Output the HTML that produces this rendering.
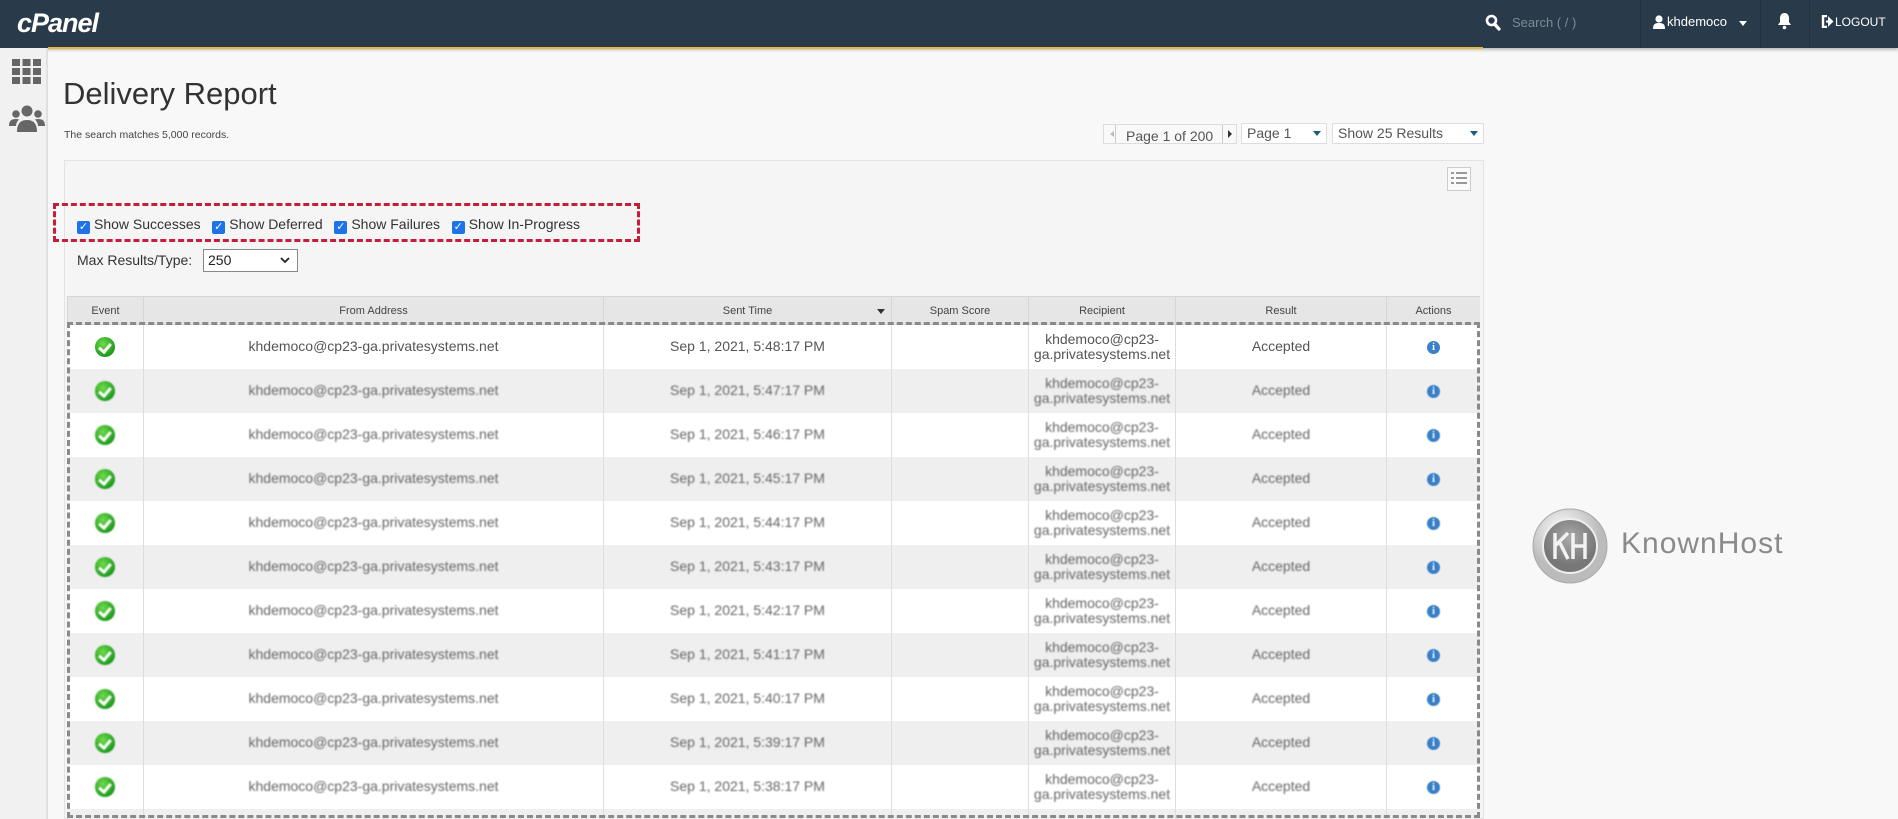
<!DOCTYPE html>
<html style="width:1898px;height:819px;overflow:hidden"><head><meta charset="utf-8"><style>
*{box-sizing:border-box;margin:0;padding:0}
body{width:1898px;height:819px;overflow:hidden;background:#f8f8f8;font-family:"Liberation Sans",sans-serif;position:relative}
.top{position:absolute;left:0;top:0;width:1898px;height:48px;background:#293a4a;box-shadow:0 2px 3px rgba(0,0,0,.25)}
.abs{position:absolute}
.side{position:absolute;left:0;top:48px;width:48px;height:771px;background:#f1f1f1;border-right:2px solid #e0e0e0}
.sep{position:absolute;top:0;width:1px;height:48px;background:#22303d}
table{border-collapse:collapse;table-layout:fixed}
td,th{border-right:1px solid #ddd;text-align:center;font-size:14px;color:#555}
th{height:28px;font-size:11px;font-weight:normal;color:#444;background:#e6e6e6;border:1px solid #d6d6d6}
td{height:44px;line-height:15px}
tr.o td{background:#fff}
tr.e td{background:#efefef}
tr.b td span{filter:blur(.7px);color:#666}
.chk{width:20px;height:20px;border-radius:50%;background:radial-gradient(circle at 40% 35%,#6fdc4a,#1e9a1e 70%);display:inline-block;position:relative;vertical-align:middle}
.chk:after{content:"";position:absolute;left:6px;top:4px;width:5px;height:9px;border:solid #fff;border-width:0 3px 3px 0;transform:rotate(40deg)}
.inf{width:13px;height:13px;border-radius:50%;background:#3a7fc9;display:inline-block;color:#fff;font-size:10px;line-height:13px;font-weight:bold;font-family:"Liberation Serif",serif;vertical-align:middle}
tr.b td span.inf{color:#fff;filter:blur(.5px)}
.cb{display:inline-block;width:13px;height:13px;background:#1e73e8;border-radius:2px;color:#fff;font-size:11px;line-height:13px;text-align:center;vertical-align:-1px;margin-right:4px}
</style></head><body>
<div class="top">
 <div class="abs" style="left:17px;top:8px;color:#fff;font-size:27px;font-weight:bold;font-style:italic;letter-spacing:-1px">cPanel</div>
 <svg class="abs" style="left:1485px;top:14px" width="16" height="18" viewBox="0 0 16 18"><circle cx="6.5" cy="6.5" r="4.5" fill="none" stroke="#fff" stroke-width="2.6"/><path d="M9.5 10l4.5 5" stroke="#fff" stroke-width="3.2" stroke-linecap="round"/></svg>
 <div class="abs" style="left:1512px;top:15px;color:#7e8a96;font-size:13px">Search ( / )</div>
 <div class="sep" style="left:1640px"></div>
 <svg class="abs" style="left:1653px;top:15px" width="12" height="14" viewBox="0 0 12 14"><circle cx="6" cy="4" r="3.6" fill="#fff"/><path d="M0 14c0-5 2-6 6-6s6 1 6 6z" fill="#fff"/></svg>
 <div class="abs" style="left:1667px;top:14px;color:#fff;font-size:13px">khdemoco</div>
 <div class="abs" style="left:1739px;top:21px;border:4px solid transparent;border-top:5px solid #fff"></div>
 <div class="sep" style="left:1760px"></div>
 <svg class="abs" style="left:1777px;top:12px" width="15" height="18" viewBox="0 0 15 18"><path d="M7.5 1c3 0 4.5 2.5 4.5 5v4l2 3H1l2-3V6c0-2.5 1.5-5 4.5-5z" fill="#fff"/><circle cx="7.5" cy="15.5" r="1.8" fill="#fff"/></svg>
 <div class="sep" style="left:1809px"></div>
 <svg class="abs" style="left:1821px;top:15px" width="13" height="13" viewBox="0 0 13 13"><path d="M6 1H2v11h4" fill="none" stroke="#fff" stroke-width="2.4"/><path d="M5 6.5h4M8 3.5l3 3-3 3z" stroke="#fff" stroke-width="2" fill="#fff"/></svg>
 <div class="abs" style="left:1835px;top:15px;color:#fff;font-size:12px">LOGOUT</div>
</div>
<div class="abs" style="left:48px;top:47px;width:1435px;height:2px;background:#e2b93b"></div>
<div class="side">
 <svg class="abs" style="left:12px;top:11px" width="29" height="25" viewBox="0 0 29 25"><g fill="#666"><rect x="0" y="0" width="8" height="7"/><rect x="10.5" y="0" width="8" height="7"/><rect x="21" y="0" width="8" height="7"/><rect x="0" y="9" width="8" height="7"/><rect x="10.5" y="9" width="8" height="7"/><rect x="21" y="9" width="8" height="7"/><rect x="0" y="18" width="8" height="7"/><rect x="10.5" y="18" width="8" height="7"/><rect x="21" y="18" width="8" height="7"/></g></svg>
 <svg class="abs" style="left:9px;top:57px" width="36" height="27" viewBox="0 0 36 27"><g fill="#666"><circle cx="18" cy="6" r="5.5"/><circle cx="7" cy="9" r="3.8"/><circle cx="29" cy="9" r="3.8"/><path d="M8 27c0-9 4-12 10-12s10 3 10 12z"/><path d="M0 21c0-5 2-7 7-7 2 0 3 .5 3 .5-2 2-3 4-3 6.5z"/><path d="M36 21c0-5-2-7-7-7-2 0-3 .5-3 .5 2 2 3 4 3 6.5z"/></g></svg>
</div>
<div class="abs" style="left:63px;top:76px;font-size:31px;color:#333">Delivery Report</div>
<div class="abs" style="left:64px;top:129px;font-size:10.5px;color:#444">The search matches 5,000 records.</div>
<div class="abs" style="left:1103px;top:124px;width:134px;height:20px;border:1px solid #ddd;background:#f9f9f9;font-size:14px;color:#555;line-height:20px">
 <span class="abs" style="left:3px;top:6px;border:3px solid transparent;border-right:4px solid #bbb"></span>
 <span class="abs" style="left:11px;top:0;height:18px;border-left:1px solid #ccc"></span>
 <span class="abs" style="left:22px;top:1px">Page 1 of 200</span>
 <span class="abs" style="left:118px;top:0;height:18px;border-left:1px solid #ccc"></span>
 <span class="abs" style="left:124px;top:5px;border:4px solid transparent;border-left:4px solid #333"></span>
</div>
<div class="abs" style="left:1241px;top:123px;width:86px;height:21px;border:1px solid #ddd;background:#fff;font-size:14px;color:#555;padding-left:5px;line-height:19px">Page 1<span class="abs" style="left:71px;top:7px;border:4px solid transparent;border-top:5px solid #1d5d7a"></span></div>
<div class="abs" style="left:1332px;top:123px;width:152px;height:21px;border:1px solid #ddd;background:#fff;font-size:14px;color:#555;padding-left:5px;line-height:19px">Show 25 Results<span class="abs" style="left:137px;top:7px;border:4px solid transparent;border-top:5px solid #1d5d7a"></span></div>
<div class="abs" style="left:64px;top:160px;width:1420px;height:659px;background:#f5f5f5;border:1px solid #e3e3e3"></div>
<div class="abs" style="left:1447px;top:167px;width:24px;height:24px;border:1px solid #ccc;background:#fafafa">
 <svg width="22" height="22" viewBox="0 0 22 22"><g fill="#999"><rect x="3" y="4" width="3" height="2"/><rect x="8" y="4" width="11" height="2"/><rect x="3" y="9" width="3" height="2"/><rect x="8" y="9" width="11" height="2"/><rect x="3" y="14" width="3" height="2"/><rect x="8" y="14" width="11" height="2"/></g></svg>
</div>
<div class="abs" style="left:53px;top:203px;width:587px;height:39px;border:3px dashed #c41e3a"></div>
<div class="abs" style="left:77px;top:216px;font-size:14px;color:#333;white-space:nowrap">
 <span class="cb">✓</span>Show Successes&nbsp;&nbsp;&nbsp;<span class="cb">✓</span>Show Deferred&nbsp;&nbsp;&nbsp;<span class="cb">✓</span>Show Failures&nbsp;&nbsp;&nbsp;<span class="cb">✓</span>Show In-Progress
</div>
<div class="abs" style="left:77px;top:252px;font-size:14px;color:#333">Max Results/Type:</div>
<div class="abs" style="left:203px;top:249px;width:95px;height:23px;border:1px solid #888;background:#fff;font-size:14px;color:#222;padding-left:4px;line-height:21px">250
 <svg class="abs" style="left:76px;top:7px" width="10" height="7" viewBox="0 0 10 7"><path d="M1 1l4 4 4-4" fill="none" stroke="#222" stroke-width="1.8"/></svg></div>
<div class="abs" style="left:67px;top:296px;width:1413px;height:523px;overflow:hidden">
<table style="width:1413px">
<colgroup><col style="width:76px"><col style="width:460px"><col style="width:288px"><col style="width:137px"><col style="width:147px"><col style="width:211px"><col style="width:94px"></colgroup>
<tr><th>Event</th><th>From Address</th><th style="position:relative">Sent Time<span class="abs" style="right:6px;top:12px;border:4px solid transparent;border-top:5px solid #333"></span></th><th>Spam Score</th><th>Recipient</th><th>Result</th><th>Actions</th></tr>
<tr class="o"><td><span class="chk"></span></td><td><span>khdemoco@cp23-ga.privatesystems.net</span></td><td><span>Sep 1, 2021, 5:48:17 PM</span></td><td></td><td><span>khdemoco@cp23-<br>ga.privatesystems.net</span></td><td><span>Accepted</span></td><td><span class="inf">i</span></td></tr>
<tr class="e b"><td><span class="chk"></span></td><td><span>khdemoco@cp23-ga.privatesystems.net</span></td><td><span>Sep 1, 2021, 5:47:17 PM</span></td><td></td><td><span>khdemoco@cp23-<br>ga.privatesystems.net</span></td><td><span>Accepted</span></td><td><span class="inf">i</span></td></tr>
<tr class="o b"><td><span class="chk"></span></td><td><span>khdemoco@cp23-ga.privatesystems.net</span></td><td><span>Sep 1, 2021, 5:46:17 PM</span></td><td></td><td><span>khdemoco@cp23-<br>ga.privatesystems.net</span></td><td><span>Accepted</span></td><td><span class="inf">i</span></td></tr>
<tr class="e b"><td><span class="chk"></span></td><td><span>khdemoco@cp23-ga.privatesystems.net</span></td><td><span>Sep 1, 2021, 5:45:17 PM</span></td><td></td><td><span>khdemoco@cp23-<br>ga.privatesystems.net</span></td><td><span>Accepted</span></td><td><span class="inf">i</span></td></tr>
<tr class="o b"><td><span class="chk"></span></td><td><span>khdemoco@cp23-ga.privatesystems.net</span></td><td><span>Sep 1, 2021, 5:44:17 PM</span></td><td></td><td><span>khdemoco@cp23-<br>ga.privatesystems.net</span></td><td><span>Accepted</span></td><td><span class="inf">i</span></td></tr>
<tr class="e b"><td><span class="chk"></span></td><td><span>khdemoco@cp23-ga.privatesystems.net</span></td><td><span>Sep 1, 2021, 5:43:17 PM</span></td><td></td><td><span>khdemoco@cp23-<br>ga.privatesystems.net</span></td><td><span>Accepted</span></td><td><span class="inf">i</span></td></tr>
<tr class="o b"><td><span class="chk"></span></td><td><span>khdemoco@cp23-ga.privatesystems.net</span></td><td><span>Sep 1, 2021, 5:42:17 PM</span></td><td></td><td><span>khdemoco@cp23-<br>ga.privatesystems.net</span></td><td><span>Accepted</span></td><td><span class="inf">i</span></td></tr>
<tr class="e b"><td><span class="chk"></span></td><td><span>khdemoco@cp23-ga.privatesystems.net</span></td><td><span>Sep 1, 2021, 5:41:17 PM</span></td><td></td><td><span>khdemoco@cp23-<br>ga.privatesystems.net</span></td><td><span>Accepted</span></td><td><span class="inf">i</span></td></tr>
<tr class="o b"><td><span class="chk"></span></td><td><span>khdemoco@cp23-ga.privatesystems.net</span></td><td><span>Sep 1, 2021, 5:40:17 PM</span></td><td></td><td><span>khdemoco@cp23-<br>ga.privatesystems.net</span></td><td><span>Accepted</span></td><td><span class="inf">i</span></td></tr>
<tr class="e b"><td><span class="chk"></span></td><td><span>khdemoco@cp23-ga.privatesystems.net</span></td><td><span>Sep 1, 2021, 5:39:17 PM</span></td><td></td><td><span>khdemoco@cp23-<br>ga.privatesystems.net</span></td><td><span>Accepted</span></td><td><span class="inf">i</span></td></tr>
<tr class="o b"><td><span class="chk"></span></td><td><span>khdemoco@cp23-ga.privatesystems.net</span></td><td><span>Sep 1, 2021, 5:38:17 PM</span></td><td></td><td><span>khdemoco@cp23-<br>ga.privatesystems.net</span></td><td><span>Accepted</span></td><td><span class="inf">i</span></td></tr>
<tr class="e b"><td></td><td></td><td></td><td></td><td></td><td></td><td></td></tr>
</table>
</div>
<div class="abs" style="left:67px;top:322px;width:1413px;height:496px;border:3px dashed #8a8a8a"></div>
<svg class="abs" style="left:1531px;top:507px" width="78" height="78" viewBox="0 0 78 78">
 <defs><radialGradient id="g1" cx="40%" cy="30%"><stop offset="0" stop-color="#fff"/><stop offset="1" stop-color="#bbb"/></radialGradient><radialGradient id="g2" cx="50%" cy="35%"><stop offset="0" stop-color="#aaa"/><stop offset="1" stop-color="#777"/></radialGradient></defs>
 <circle cx="39" cy="39" r="37" fill="url(#g1)" stroke="#aaa"/>
 <circle cx="39" cy="39" r="27" fill="url(#g2)" stroke="#eee" stroke-width="2"/>
 <path d="M24 26v26M24 39l13-13M29 36l8 16M42 26v26M54 26v26M42 39h12" stroke="#f2f2f2" stroke-width="3.5" fill="none"/>
</svg>
<div class="abs" style="left:1621px;top:527px;font-size:30px;color:#8a8a8a;letter-spacing:1px">KnownHost</div>
</body></html>
